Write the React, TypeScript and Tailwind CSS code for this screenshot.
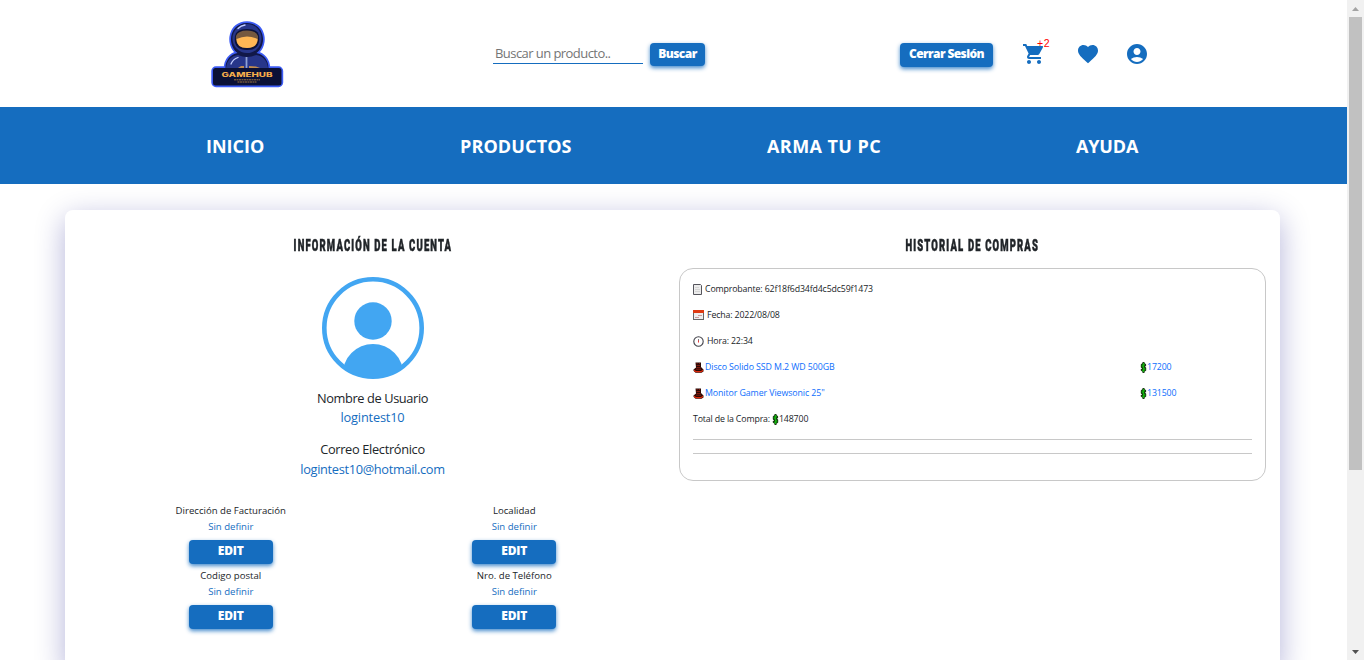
import React from "react";
import { MdShoppingCart, MdFavorite, MdAccountCircle } from "react-icons/md";

const buttonBase =
  "flex justify-center rounded-[4px] bg-[#156dbf] font-extrabold text-white shadow-[0_2px_4px_rgba(21,109,191,0.8)]";

function Logo() {
  return (
    <svg viewBox="0 0 76 70" className="h-[70px] w-[76px]">
      <defs>
        <filter id="glow" x="-10%" y="-10%" width="120%" height="120%">
          <feGaussianBlur stdDeviation="0.5" />
        </filter>
      </defs>
      <g fill="#3c5cf5" stroke="#3c5cf5" strokeWidth="3.4" strokeLinejoin="round" filter="url(#glow)">
        <path d="M16.500 49c0-8 5-13.500 12-15C17 25 21 4 38 4s21 21 9.500 30c7 1.500 12 7 12 15z" />
        <rect x="4" y="49" width="68.500" height="17.500" rx="3" />
      </g>
      <path d="M16.500 49c0-8 5-13.500 12-15C17 25 21 4 38 4s21 21 9.500 30c7 1.500 12 7 12 15z" fill="#111848" />
      <path d="M17 49c1-8 5-12 12-13q9 4 18 0c7 1 11 5 12 13z" fill="#27368a" />
      <ellipse cx="38" cy="19.500" rx="14.500" ry="14.500" fill="#27368a" />
      <path d="M26 17q1-7 12-7t12 7q2 14-12 14T26 17z" fill="#0c1238" />
      <path d="M27 17q2-5.500 11-5.500t11 5.500q1 11.500-11 12Q26 28.500 27 17z" fill="#75583f" />
      <path d="M27.500 20q10.500-5 21 0 0 9-10.500 9t-10.500-9z" fill="#ffb755" />
      <path d="M29 9.500q3-3 7-3.500M22 45q2-5 7-6.500" fill="none" stroke="#c3ceff" strokeWidth="1.300" strokeLinecap="round" />
      <path d="M37.500 38v11" stroke="#8fa0d5" strokeWidth="1.800" />
      <path d="M29 49l3-2h3v2zM40 47l7 .5 4 1.500H40z" fill="#c08c50" />
      <rect x="4" y="49" width="68.500" height="17.500" rx="2.500" fill="#0b1136" />
      <text x="38" y="57.500" textAnchor="middle" textLength="51" lengthAdjust="spacingAndGlyphs" fontSize="6.200" fontWeight="800" fontFamily="Inter, sans-serif" fill="#f6ad4b">GAMEHUB</text>
      <path d="M25 60.800h26M28.500 63h19" stroke="#a0763f" strokeWidth="1" strokeDasharray="2 .5" />
    </svg>
  );
}

function Avatar() {
  return (
    <svg viewBox="0 0 102 102" className="h-[102px] w-[102px]">
      <defs>
        <clipPath id="disc"><circle cx="51" cy="51" r="50" /></clipPath>
      </defs>
      <circle cx="51" cy="51" r="48.7" fill="#fff" stroke="#42a6f2" strokeWidth="4.6" />
      <circle cx="51" cy="44" r="18.7" fill="#42a6f2" />
      <ellipse cx="51" cy="98" rx="30.5" ry="31" fill="#42a6f2" clipPath="url(#disc)" />
    </svg>
  );
}

function PageIcon() {
  return (
    <svg viewBox="0 0 9 11" className="h-[11px] w-[9px]">
      <path d="M.5.5h7l1 1v9h-8z" fill="#ececec" stroke="#55555c" />
      <path d="M2 3.5h4M2 5.5h5M2 7.5h5" stroke="#ccc" strokeWidth=".7" />
    </svg>
  );
}

function CalendarIcon() {
  return (
    <svg viewBox="0 0 11 10" className="h-[10px] w-[11px]">
      <rect x=".5" y=".5" width="10" height="9" fill="#eee" stroke="#666" />
      <path d="M0 0h11v3H0z" fill="#df3a12" />
      <path d="M5 5.5h4M2 7.5h4" stroke="#c99" />
    </svg>
  );
}

function ClockIcon() {
  return (
    <svg viewBox="0 0 11 11" className="h-[11px] w-[11px]">
      <circle cx="5.5" cy="5.5" r="4.7" fill="#fff" stroke="#43434b" strokeWidth="1.1" />
      <path d="M5.5 3v2" stroke="#77777f" />
      <path d="M5.5 4.500v2" stroke="#e33" />
    </svg>
  );
}

function PointerIcon() {
  return (
    <svg viewBox="0 0 11 11" className="h-[11px] w-[11px]">
      <path d="M2.500.5h5.500v4.500l2.500 2.500v2l-2 1.200h-6l-2-2V7.500l2.500-2z" fill="#2b0905" />
      <path d="M3.500 1.500h1M6 1.500h1M3.500 3.500h3.500M3.500 5.500h4M3 7.200h5" stroke="#8b1e10" strokeWidth=".9" />
      <path d="M1 7.500l2 1.500h5l2-1.500v1.700l-2 1H3l-2-1z" fill="#df2a0b" />
    </svg>
  );
}

function DollarIcon() {
  return (
    <svg viewBox="0 0 7 11" className="h-[11px] w-[7px]">
      <path d="M2.500 0h2v1l1.600 1.200v2H4.800l1.400 1.600v2.600L4.500 9.700V11h-2V9.700L.8 8.500V7h1.300L.8 5.200V2.500L2.500 1z" fill="#173a12" />
      <path d="M3.500 1v9M5 3Q3.500 1.600 2.300 3t1.200 2.500 1.200 2.600-2.700-.1" fill="none" stroke="#12b80c" strokeWidth=".95" />
    </svg>
  );
}

function Header() {
  return (
    <header className="flex h-[107px] items-start">
      <div className="ml-[209px] mt-[19px] w-[284px]"><Logo /></div>
      <div className="mt-[43px] flex w-[407px] items-start">
        <input
          className="h-[21px] w-[150px] border-b border-[#156dbf] bg-transparent pl-[2px] text-[13px] tracking-[-0.56px] outline-none placeholder:text-[#757575]"
          placeholder="Buscar un producto.."
        />
        <button className={`${buttonBase} ml-[7px] h-[23px] w-[55px] text-[12px] leading-[22px] tracking-[-0.55px]`}>Buscar</button>
      </div>
      <button className={`${buttonBase} mt-[43px] h-[24px] w-[93px] text-[12px] leading-[22px] tracking-[-0.6px]`}>Cerrar Sesión</button>
      <div className="mt-[42px] flex items-start text-[24px] text-[#156dbf]">
        <div className="relative ml-[29px]">
          <MdShoppingCart />
          <span className="absolute left-[15px] top-[-4px] font-['Liberation_Sans',sans-serif] text-[10.5px] leading-[11px] tracking-[0.5px] text-[#ff0000]">+2</span>
        </div>
        <MdFavorite className="ml-[30px]" />
        <MdAccountCircle className="ml-[25px]" />
      </div>
    </header>
  );
}

function Nav() {
  return (
    <nav className="flex h-[77px] items-center bg-[#156dbf] pl-[206px] pt-[2px] text-[18px] font-bold text-white">
      <a className="w-[254px] tracking-[0px]">INICIO</a>
      <a className="w-[307px] tracking-[0.12px]">PRODUCTOS</a>
      <a className="w-[309px] tracking-[0.43px]">ARMA TU PC</a>
      <a className="tracking-[-0.15px]">AYUDA</a>
    </nav>
  );
}

function Title({ children }: { children: React.ReactNode }) {
  return (
    <h2 className="flex h-[20px] justify-center whitespace-nowrap font-[Roboto] text-[16.5px] font-black leading-[21px] tracking-[2px] text-[#212529]">
      <span className="origin-center scale-x-[0.575] [-webkit-text-stroke:0.5px_#212529]">{children}</span>
    </h2>
  );
}

function Field({ label }: { label: string }) {
  return (
    <div className="flex h-[65px] flex-col items-center text-[9.6px] leading-[16px]">
      <div>{label}</div>
      <div className="text-[#156dbf]">Sin definir</div>
      <button className={`${buttonBase} mt-[5px] h-[24px] w-[84px] text-[12px] leading-[21px] tracking-[-0.2px]`}>EDIT</button>
    </div>
  );
}

function Account() {
  return (
    <section className="w-[587px] text-center">
      <Title>INFORMACIÓN DE LA CUENTA</Title>
      <div className="mt-[22px] flex justify-center"><Avatar /></div>
      <div className="mt-[10px] text-[12.8px] leading-[19px] tracking-[-0.38px]">
        <div>Nombre de Usuario</div>
        <div className="tracking-[-0.2px] text-[#156dbf]">logintest10</div>
      </div>
      <div className="mt-[12px] text-[12.8px] leading-[20px] tracking-[-0.33px]">
        <div>Correo Electrónico</div>
        <div className="text-[#156dbf]">logintest10@hotmail.com</div>
      </div>
      <div className="ml-[10px] mr-[10px] mt-[24px] grid grid-cols-2">
        <Field label="Dirección de Facturación" />
        <Field label="Localidad" />
        <Field label="Codigo postal" />
        <Field label="Nro. de Teléfono" />
      </div>
    </section>
  );
}

function Product({ name, price }: { name: string; price: string }) {
  return (
    <div className="flex h-[26px] items-center text-[#0d6efd]">
      <div className="flex w-[447px] items-center gap-px"><PointerIcon /><span className="pt-[2px] tracking-[-0.08px]">{name}</span></div>
      <div className="flex items-center"><DollarIcon /><span className="pt-[2px]">{price}</span></div>
    </div>
  );
}

function History() {
  return (
    <section className="w-[587px]">
      <Title>HISTORIAL DE COMPRAS</Title>
      <div className="mt-[13px] h-[213px] rounded-[14px] border border-[#c8c8c8] px-[13px] pt-[7px] text-[8.8px] tracking-[-0.15px]">
        <div className="flex h-[26px] items-center gap-[3px]"><PageIcon /><span className="pt-[2px]">Comprobante: 62f18f6d34fd4c5dc59f1473</span></div>
        <div className="flex h-[26px] items-center gap-[3px]"><CalendarIcon /><span className="pt-[2px]">Fecha: 2022/08/08</span></div>
        <div className="flex h-[26px] items-center gap-[3px]"><ClockIcon /><span className="pt-px">Hora: 22:34</span></div>
        <Product name="Disco Solido SSD M.2 WD 500GB" price="17200" />
        <Product name={'Monitor Gamer Viewsonic 25"'} price="131500" />
        <div className="flex h-[26px] items-center"><span className="mr-[2px] pt-[2px]">Total de la Compra:</span><DollarIcon /><span className="pt-[2px]">148700</span></div>
        <hr className="mt-[7px] border-[#c8c8c8]" />
        <hr className="mt-[13px] border-[#c8c8c8]" />
      </div>
    </section>
  );
}

function Scrollbar() {
  return (
    <div className="flex h-full w-[17px] shrink-0 flex-col items-center bg-[#f1f1f1]">
      <div className="flex h-[17px] items-center"><svg className="h-[4px] w-[7px]" viewBox="0 0 7 4"><path d="M3.5 0L7 4H0z" fill="#a3a3a3" /></svg></div>
      <div className="h-[453px] w-[13px] bg-[#c1c1c1]" />
      <div className="mt-auto flex h-[17px] items-center"><svg className="h-[4px] w-[7px]" viewBox="0 0 7 4"><path d="M3.5 4L7 0H0z" fill="#505050" /></svg></div>
    </div>
  );
}

export default function App() {
  return (
    <div className="flex h-[660px] w-[1364px] overflow-hidden bg-white font-['Open_Sans','Noto_Sans',sans-serif] text-[#212529]">
      <div className="h-full w-[1347px] overflow-hidden">
        <Header />
        <Nav />
        <main className="ml-[65px] mt-[26px] flex h-[460px] w-[1215px] gap-[13px] rounded-[8px] bg-white px-[14px] pt-[25px] shadow-[0_8px_30px_rgba(0,0,128,0.3)]">
          <Account />
          <History />
        </main>
      </div>
      <Scrollbar />
    </div>
  );
}
